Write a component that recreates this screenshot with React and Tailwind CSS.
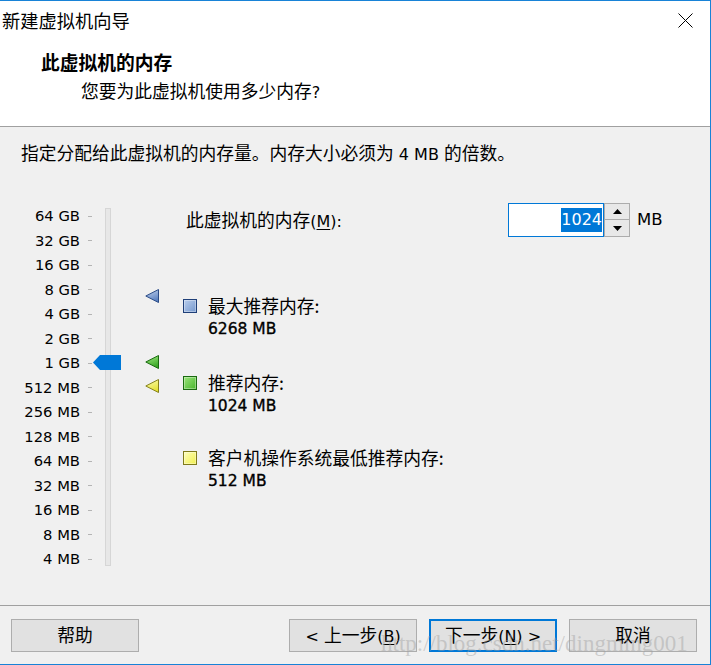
import React from 'react';

const LABELS = ['64 GB', '32 GB', '16 GB', '8 GB', '4 GB', '2 GB', '1 GB', '512 MB', '256 MB', '128 MB', '64 MB', '32 MB', '16 MB', '8 MB', '4 MB'];

function Z({ children, className = '' }) {
  return <span className={`font-['Noto_Sans_CJK_SC',sans-serif] text-[17.75px] ${className}`}>{children}</span>;
}

function Arrow({ id, from, to, stroke }) {
  return (
    <svg width="14" height="14" viewBox="0 0 14 14">
      <defs>
        <linearGradient id={id} x1="0" y1="0" x2="0.4" y2="1">
          <stop offset="0" stopColor={from} />
          <stop offset="1" stopColor={to} />
        </linearGradient>
      </defs>
      <polygon points="13.5,0.5 13.5,13.5 0.8,7" fill={`url(#${id})`} stroke={stroke} strokeLinejoin="round" />
    </svg>
  );
}

function Square({ id, from, to, stroke }) {
  return (
    <svg width="14" height="14" viewBox="0 0 14 14">
      <defs>
        <linearGradient id={id} x1="0" y1="0" x2="1" y2="1">
          <stop offset="0" stopColor={from} />
          <stop offset="1" stopColor={to} />
        </linearGradient>
      </defs>
      <rect x="0.5" y="0.5" width="13" height="13" fill={`url(#${id})`} stroke={stroke} />
      <rect x="1.5" y="1.5" width="11" height="11" fill="none" stroke="#ffffff" strokeOpacity="0.35" />
    </svg>
  );
}

function Button({ children, primary }) {
  return (
    <div
      className={`h-[33px] w-[128px] flex items-center justify-center bg-[#e1e1e1] leading-[24px] ${
        primary ? 'border-2 border-[#0078d7]' : 'border border-[#adadad]'
      }`}
    >
      <span className="whitespace-pre">{children}</span>
    </div>
  );
}

function Legend({ id, from, to, stroke, label, value, className = '' }) {
  return (
    <div className={`flex ${className}`}>
      <div className="mt-[6px] w-[14px] shrink-0">
        <Square id={id} from={from} to={to} stroke={stroke} />
      </div>
      <div className="ml-[11px] flex flex-col">
        <div className="leading-[24px] h-[24px]">
          <Z>{label}</Z>
        </div>
        <div className="leading-[24px] h-[24px] text-[15.5px] [-webkit-text-stroke:0.35px_#000]">{value}</div>
      </div>
    </div>
  );
}

export default function App() {
  return (
    <div className="w-[711px] h-[665px] border-t border-r border-b border-[#1883d7] bg-[#f0f0f0] flex flex-col overflow-hidden text-black font-['DejaVu_Sans',sans-serif] text-[16px]">
      {/* Header */}
      <div className="h-[126px] shrink-0 bg-white border-b border-[#a0a0a0]">
        <div className="flex items-center justify-between pt-[7px] h-[31px] pl-[2px] pr-[17px]">
          <Z className="text-[18.25px] leading-[24px]">新建虚拟机向导</Z>
          <svg width="15" height="15" viewBox="0 0 15 15">
            <path d="M0.5 0.5 L14.5 14.5 M14.5 0.5 L0.5 14.5" stroke="#000" strokeWidth="1" />
          </svg>
        </div>
        <div className="mt-[18px] pl-[41px] leading-[24px] h-[24px]">
          <Z className="font-bold text-[18.75px]">此虚拟机的内存</Z>
        </div>
        <div className="mt-[4px] pl-[81px] leading-[24px] h-[24px]">
          <Z>您要为此虚拟机使用多少内存</Z>?
        </div>
      </div>

      {/* Body */}
      <div className="h-[478px] shrink-0">
        <div className="pl-[21px] pt-[15px] leading-[20px] h-[35px] whitespace-nowrap">
          <Z>指定分配给此虚拟机的内存量。内存大小必须为</Z> 4 MB <Z>的倍数。</Z>
        </div>

        <div className="mt-[41px] flex">
          {/* Slider */}
          <div className="relative w-[183px] shrink-0 flex">
            <div className="w-[80px] flex flex-col pt-[1px] text-[14.75px]">
              {LABELS.map((l) => (
                <div key={l} className="h-[24.5px] flex items-center justify-end whitespace-nowrap">
                  {l}
                </div>
              ))}
            </div>
            <div className="ml-[8px] w-[4px] flex flex-col pt-[1px]">
              {LABELS.map((l) => (
                <div key={l} className="h-[24.5px] flex items-center">
                  <div className="h-px w-[4px] bg-[#b4b4b4]" />
                </div>
              ))}
            </div>
            <div className="ml-[13px] mt-[5px] w-[6px] h-[358px] bg-[#e7e7e7] border border-[#d6d6d6]" />

            <div className="absolute left-[93px] top-[152px]">
              <svg width="28" height="15" viewBox="0 0 28 15">
                <polygon points="0,7.5 7,0 28,0 28,15 7,15" fill="#0078d7" />
              </svg>
            </div>
            <div className="absolute left-[145px] top-[86px]">
              <Arrow id="ab" from="#c9d8f0" to="#5a80c0" stroke="#2a4b86" />
            </div>
            <div className="absolute left-[145px] top-[152px]">
              <Arrow id="ag" from="#a6ec86" to="#3aa826" stroke="#1a6a10" />
            </div>
            <div className="absolute left-[145px] top-[176px]">
              <Arrow id="ay" from="#ffffb8" to="#e4e034" stroke="#85801a" />
            </div>
          </div>

          {/* Right column */}
          <div className="flex flex-col">
            <div className="flex items-center h-[34px]">
              <div className="ml-[3px] w-[322px] leading-[24px] whitespace-nowrap">
                <Z>此虚拟机的内存</Z>(<span className="underline underline-offset-2">M</span>):
              </div>
              <div className="w-[96px] h-[34px] border border-[#0078d7] bg-white flex items-center justify-end pr-[1px]">
                <span className="bg-[#0078d7] text-white h-[24px] leading-[24px]">1024</span>
              </div>
              <div className="w-[26px] h-[34px] flex flex-col">
                <div className="h-[17px] border border-[#acacac] bg-[#e8e8e8] flex items-center justify-center">
                  <svg width="9" height="5" viewBox="0 0 9 5">
                    <polygon points="0,5 4.5,0 9,5" fill="#000" />
                  </svg>
                </div>
                <div className="h-[17px] border border-t-0 border-[#acacac] bg-[#e8e8e8] flex items-center justify-center">
                  <svg width="9" height="5" viewBox="0 0 9 5">
                    <polygon points="0,0 9,0 4.5,5" fill="#000" />
                  </svg>
                </div>
              </div>
              <div className="ml-[7px] text-[16.5px]">MB</div>
            </div>

            <Legend
              className="mt-[56px]"
              id="sb"
              from="#bcd0ee"
              to="#7396cc"
              stroke="#1f3f78"
              label="最大推荐内存:"
              value="6268 MB"
            />
            <Legend
              className="mt-[29px]"
              id="sg"
              from="#9ee67e"
              to="#45b42a"
              stroke="#1a6a10"
              label="推荐内存:"
              value="1024 MB"
            />
            <Legend
              className="mt-[27px]"
              id="sy"
              from="#ffffc0"
              to="#f0ee48"
              stroke="#7f7a1a"
              label="客户机操作系统最低推荐内存:"
              value="512 MB"
            />
          </div>
        </div>
      </div>

      {/* Footer */}
      <div className="relative h-[59px] shrink-0 border-t border-[#a0a0a0] pt-[13px] pl-[11px] pr-[13px] flex items-start">
        <Button>
          <Z>帮助</Z>
        </Button>
        <div className="flex-1" />
        <Button>
          {'< '}<Z>上一步</Z>(<span className="underline underline-offset-2">B</span>)
        </Button>
        <div className="ml-[12px]">
          <Button primary>
            <Z>下一步</Z>(<span className="underline underline-offset-2">N</span>){' >'}
          </Button>
        </div>
        <div className="ml-[12px]">
          <Button>
            <Z>取消</Z>
          </Button>
        </div>
        <div className="absolute left-[381px] top-[26px] font-['Liberation_Serif',serif] text-[23px] leading-[23px] text-[#a0a0a0]/45 whitespace-nowrap pointer-events-none">
          http://blog.csdn.net/dingming001
        </div>
      </div>
    </div>
  );
}
